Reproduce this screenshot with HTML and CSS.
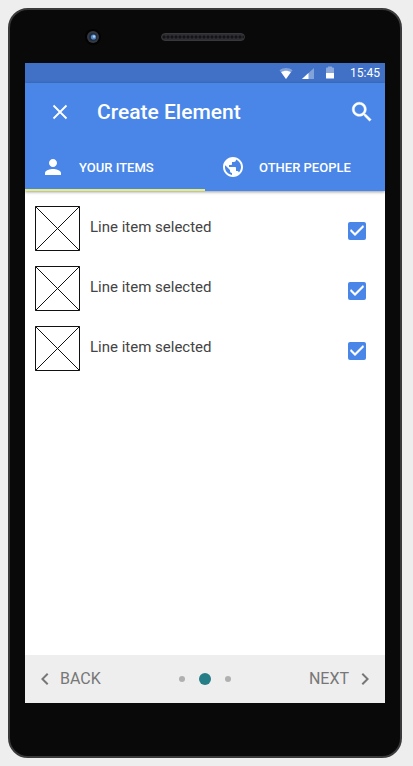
FILE: index.html
```html
<!DOCTYPE html>
<html lang="en">
<head>
<meta charset="utf-8">
<meta name="viewport" content="width=device-width, initial-scale=1">
<title>Create Element</title>
<link rel="stylesheet" href="styles.css">
</head>
<body>
<div class="phone">
  <div class="bezel">
    <svg class="camera" viewBox="0 0 16 16" aria-hidden="true">
      <circle cx="8" cy="8" r="8" fill="#030303"/>
      <circle cx="8" cy="8" r="6" fill="#35383d"/>
      <circle cx="8" cy="8" r="4" fill="#1d2c45"/>
      <circle cx="8.500" cy="8" r="2.600" fill="#5588c4"/>
      <circle cx="9" cy="7.500" r="1.200" fill="#b5d3f0"/>
    </svg>
    <div class="speaker"></div>
  </div>
  <div class="screen">
    <div class="status">
      <svg class="status-icon" viewBox="0 0 14 14" aria-hidden="true">
        <path d="M7 13 0.500 4.200C4 1.300 10 1.300 13.500 4.200z" fill="#fff" opacity=".35"/>
        <path d="M7 13 2.200 6.300C5 4.300 9 4.300 11.800 6.300z" fill="#fff"/>
      </svg>
      <svg class="status-icon" viewBox="0 0 14 14" aria-hidden="true">
        <path d="M1 13 13 2V13z" fill="#fff" opacity=".35"/>
        <path d="M1 13 7.500 7V13z" fill="#fff"/>
      </svg>
      <svg class="status-icon" viewBox="0 0 14 14" aria-hidden="true">
        <path d="M3 7V2.500Q3 1.500 4 1.500H5V.5H9v1h1q1 0 1 1V7z" fill="#fff" opacity=".4"/>
        <path d="M3 7h8v5q0 .5-.5.500h-7q-.5 0-.5-.5z" fill="#fff"/>
      </svg>
      <time class="clock">15:45</time>
    </div>
    <header class="header">
      <div class="toolbar">
        <button class="icon-button" type="button" aria-label="Close">
          <svg class="icon icon-line" viewBox="0 0 24 24"><path d="M5.500 5.500l13 13M18.500 5.500l-13 13"/></svg>
        </button>
        <h1 class="title">Create Element</h1>
        <button class="icon-button" type="button" aria-label="Search">
          <svg class="icon icon-large" viewBox="0 0 24 24"><path d="M15.500 14h-.79l-.28-.27C15.410 12.590 16 11.110 16 9.500 16 5.910 13.090 3 9.500 3S3 5.910 3 9.500 5.910 16 9.500 16c1.610 0 3.090-.59 4.230-1.570l.27.28v.79l5 4.990L20.490 19l-4.990-5zm-6 0C7.010 14 5 11.990 5 9.500S7.010 5 9.500 5 14 7.010 14 9.500 11.990 14 9.500 14z"/></svg>
        </button>
      </div>
      <nav class="tabs">
        <a class="tab tab-active" href="#your-items" aria-current="page">
          <svg class="icon" viewBox="0 0 24 24" aria-hidden="true"><path d="M12 12c2.210 0 4-1.790 4-4s-1.790-4-4-4-4 1.790-4 4 1.790 4 4 4zm0 2c-2.670 0-8 1.340-8 4v2h16v-2c0-2.660-5.330-4-8-4z"/></svg>
          YOUR ITEMS
        </a>
        <a class="tab" href="#other-people">
          <svg class="icon" viewBox="0 0 24 24" aria-hidden="true"><path d="M12 2C6.480 2 2 6.480 2 12s4.480 10 10 10 10-4.480 10-10S17.520 2 12 2zm-1 17.930c-3.950-.49-7-3.850-7-7.930 0-.62.08-1.210.21-1.790L9 15v1c0 1.100.9 2 2 2v1.930zm6.900-2.540c-.26-.81-1-1.390-1.900-1.390h-1v-3c0-.55-.45-1-1-1H8v-2h2c.55 0 1-.45 1-1V7h2c1.100 0 2-.9 2-2v-.41c2.930 1.190 5 4.060 5 7.410 0 2.080-.8 3.970-2.100 5.390z"/></svg>
          OTHER PEOPLE
        </a>
      </nav>
    </header>
    <main class="content" id="your-items">
      <ul class="list">
        <li class="row">
          <svg class="thumb" viewBox="0 0 45 45" aria-hidden="true"><path d="M.5.5h44v44H.5zM.5.5l44 44M44.500.5l-44 44"/></svg>
          <label class="row-label" for="item-1">Line item selected</label>
          <input class="check" type="checkbox" id="item-1" checked>
        </li>
        <li class="row">
          <svg class="thumb" viewBox="0 0 45 45" aria-hidden="true"><path d="M.5.5h44v44H.5zM.5.5l44 44M44.500.5l-44 44"/></svg>
          <label class="row-label" for="item-2">Line item selected</label>
          <input class="check" type="checkbox" id="item-2" checked>
        </li>
        <li class="row">
          <svg class="thumb" viewBox="0 0 45 45" aria-hidden="true"><path d="M.5.5h44v44H.5zM.5.5l44 44M44.500.5l-44 44"/></svg>
          <label class="row-label" for="item-3">Line item selected</label>
          <input class="check" type="checkbox" id="item-3" checked>
        </li>
      </ul>
    </main>
    <footer class="stepper">
      <button class="step" type="button">
        <svg class="icon" viewBox="0 0 24 24" aria-hidden="true"><path d="M15.410 7.410 14 6l-6 6 6 6 1.410-1.410L10.830 12z"/></svg>
        BACK
      </button>
      <div class="dots">
        <span class="dot"></span>
        <span class="dot dot-active"></span>
        <span class="dot"></span>
      </div>
      <button class="step step-next" type="button">
        NEXT
        <svg class="icon" viewBox="0 0 24 24" aria-hidden="true"><path d="M10 6 8.590 7.410 13.170 12l-4.580 4.590L10 18l6-6z"/></svg>
      </button>
    </footer>
  </div>
</div>
</body>
</html>
```
FILE: styles.css
```css
* {
  box-sizing: border-box;
}

body {
  margin: 0;
  min-height: 100vh;
  padding: 8px 11px 8px 8px;
  display: flex;
  background: #eee;
  font-family: Roboto, sans-serif;
}

button {
  margin: 0;
  padding: 0;
  border: 0;
  background: none;
  font: inherit;
  color: inherit;
  cursor: pointer;
}

.phone {
  flex: 1;
  display: flex;
  flex-direction: column;
  padding: 0 15px 53px;
  border: 2px solid #3a3a3c;
  border-radius: 20px;
  background: #090909;
}

.bezel {
  height: 53px;
  display: grid;
  grid-template-columns: 1fr auto 1fr;
  align-items: center;
}

.camera {
  width: 16px;
  height: 16px;
  margin-left: 60px;
}

.speaker {
  width: 84px;
  height: 8px;
  margin-right: 4px;
  border: 1px solid #38383c;
  border-radius: 4px;
  background: radial-gradient(circle, #141416 1px, #2e2e32 2px) 0 0 / 4px 6px;
}

.screen {
  flex: 1;
  display: flex;
  flex-direction: column;
  background: #fff;
}

.status {
  height: 20px;
  display: flex;
  align-items: center;
  justify-content: flex-end;
  gap: 8px;
  padding-right: 5px;
  background: #4071c7;
  color: #fff;
}

.status-icon {
  width: 14px;
  height: 14px;
}

.clock {
  margin-left: 5px;
  font-size: 12px;
  line-height: 20px;
}

.header {
  background: #4986e7;
  color: #fff;
  box-shadow: 0 1px 3px rgba(0, 0, 0, 0.4);
}

.icon {
  width: 24px;
  height: 24px;
  flex: none;
  display: block;
  fill: currentColor;
}

.icon-line {
  fill: none;
  stroke: currentColor;
  stroke-width: 1.8;
}

.icon-large {
  width: 26px;
  height: 26px;
  stroke: currentColor;
  stroke-width: 0.4;
}

.toolbar {
  height: 60px;
  display: flex;
  align-items: center;
  padding: 0 10px 2px 23px;
}

.title {
  flex: 1;
  margin: 0 0 0 25px;
  font-size: 21px;
  font-weight: 500;
  line-height: 28px;
}

.tabs {
  display: flex;
}

.tab {
  flex: 1;
  height: 48px;
  display: flex;
  align-items: center;
  gap: 14px;
  padding-left: 16px;
  color: #fff;
  font-size: 13px;
  font-weight: 500;
  text-decoration: none;
}

.tab-active {
  box-shadow: inset 0 -2px #e6ee7a;
}

.content {
  flex: 1;
}

.list {
  margin: 0;
  padding: 15px 19px 0 10px;
  list-style: none;
}

.row {
  height: 60px;
  display: flex;
  align-items: flex-start;
}

.thumb {
  width: 45px;
  height: 45px;
  fill: none;
  stroke: #111;
  stroke-width: 1;
}

.row-label {
  flex: 1;
  margin-left: 10px;
  color: #444;
  font-size: 15px;
  line-height: 42px;
}

.check {
  appearance: none;
  width: 18px;
  height: 18px;
  margin: 16px 0 0;
  border-radius: 2px;
  box-shadow: inset 0 0 0 2px #777;
}

.check:checked {
  background: #4986e7;
  box-shadow: none;
}

.check:checked::before {
  content: "";
  display: block;
  width: 18px;
  height: 18px;
  background: #fff;
  clip-path: polygon(7px 14px, 2px 9px, 3px 7px, 7px 11px, 15px 3px, 16px 5px);
}

.stepper {
  height: 48px;
  display: grid;
  grid-template-columns: 1fr auto 1fr;
  align-items: center;
  padding: 0 8px;
  background: #eee;
}

.step {
  display: flex;
  align-items: center;
  gap: 3px;
  color: #777;
  font-size: 16px;
  line-height: 26px;
}

.step-next {
  justify-self: end;
  gap: 4px;
}

.dots {
  display: flex;
  align-items: center;
  gap: 14px;
}

.dot {
  width: 6px;
  height: 6px;
  border-radius: 50%;
  background: #b0b0b0;
}

.dot-active {
  width: 12px;
  height: 12px;
  background: #257d87;
}
```
